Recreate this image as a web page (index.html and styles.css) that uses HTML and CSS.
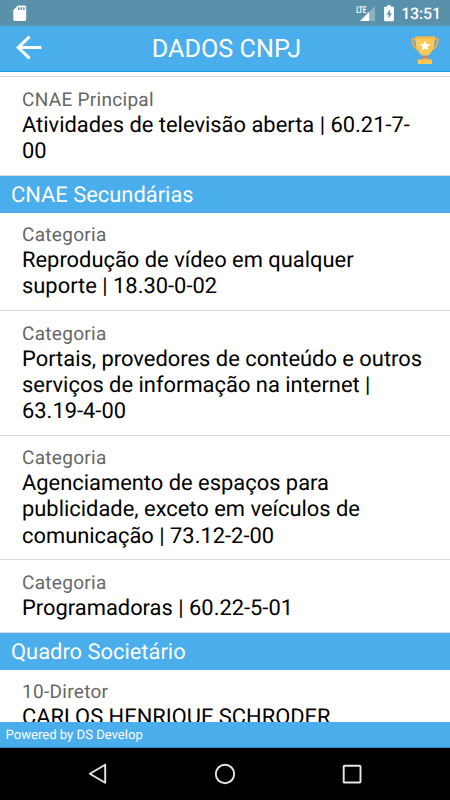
FILE: index.html
```html
<!DOCTYPE html>
<html lang="pt-BR">
<head>
    <meta charset="UTF-8">
    <meta name="viewport" content="width=device-width, initial-scale=1.0">
    <title>Dados CNPJ</title>
    <link rel="stylesheet" href="styles.css">
</head>
<body>
    <div class="screen">
        <div class="statusbar">
            <svg class="sd" width="14" height="17" viewBox="0 0 14 17">
                <path d="M5 0.5H11.7Q13.2 0.5 13.2 2V14.5Q13.2 16 11.7 16H1.8Q0.3 16 0.3 14.5V5.2Z" fill="#fff"/>
                <path d="M5.7 2.2V5M8.3 2.2V5M10.9 2.2V5" stroke="#5991ab" stroke-width="1.5"/>
            </svg>
            <div class="status-right">
                <svg class="signal" width="20" height="17" viewBox="0 0 20 17">
                    <path d="M19 1V16H4Z" fill="#8cb1c2"/>
                    <path d="M13.2 6.8V16H4Z" fill="#fff"/>
                    <path d="M0 0H11V8H0Z" fill="#5991ab"/>
                    <text x="0.2" y="7.6" class="lte" textLength="10" lengthAdjust="spacingAndGlyphs">LTE</text>
                </svg>
                <svg class="battery" width="10" height="17" viewBox="0 0 10 17">
                    <path d="M3 0.3H7V1.8H9Q9.9 1.8 9.9 2.7V15.3Q9.9 16.2 9 16.2H1Q0.1 16.2 0.1 15.3V2.7Q0.1 1.8 1 1.8H3Z" fill="#fff"/>
                    <path d="M6.2 4.2L2.5 9.5H4.5V13.8L7.8 8.2H5.8Z" fill="#5991ab"/>
                </svg>
                <span class="clock">13:51</span>
            </div>
        </div>

        <div class="header">
            <svg class="back" width="26" height="26" viewBox="0 0 26 26">
                <path d="M13.6 1.6L2.2 12.5L13.6 23.4M2.2 12.5H25.3" fill="none" stroke="#fff" stroke-width="3"/>
            </svg>
            <h1>DADOS CNPJ</h1>
            <svg class="trophy" width="28" height="29" viewBox="0 0 28 29">
                <path d="M5 3.2H1.2Q1.2 12.4 9.5 14.5M23 3.2H26.8Q26.8 12.4 18.5 14.5" fill="none" stroke="#f0aa45" stroke-width="2"/>
                <path d="M4.2 0.5H23.8C23.8 9 22.5 15 17.2 19.5H10.8C5.5 15 4.2 9 4.2 0.5Z" fill="#fdc854"/>
                <path d="M4.2 0.5H23.8V2H4.2Z" fill="#f3b04a"/>
                <path d="M14 4.5L15.6 8L19.1 8.4L16.5 10.9L17.3 14.5L14 12.6L10.7 14.5L11.5 10.9L8.9 8.4L12.4 8Z" fill="#fff"/>
                <path d="M12 20.5H16V24H12Z" fill="#f0aa45"/>
                <path d="M11.5 20.2H16.5V22H11.5Z" fill="#ee6a50"/>
                <path d="M7 23.7H21V28H7Z" fill="#fdc854"/>
                <path d="M7 23.2H21V24.4H7Z" fill="#f3b04a"/>
            </svg>
        </div>

        <!-- list scrolled a bit, last item is cut by the footer -->
        <div class="list">
            <div class="item first">
                <span class="label">CNAE Principal</span>
                <p>Atividades de televisão aberta | 60.21-7-<br>00</p>
            </div>
            <h2>CNAE Secundárias</h2>
            <div class="item">
                <span class="label">Categoria</span>
                <p>Reprodução de vídeo em qualquer<br>suporte | 18.30-0-02</p>
            </div>
            <div class="item">
                <span class="label">Categoria</span>
                <p>Portais, provedores de conteúdo e outros<br>serviços de informação na internet |<br>63.19-4-00</p>
            </div>
            <div class="item">
                <span class="label">Categoria</span>
                <p>Agenciamento de espaços para<br>publicidade, exceto em veículos de<br>comunicação | 73.12-2-00</p>
            </div>
            <div class="item">
                <span class="label">Categoria</span>
                <p>Programadoras | 60.22-5-01</p>
            </div>
            <h2>Quadro Societário</h2>
            <div class="item">
                <span class="label">10-Diretor</span>
                <p>CARLOS HENRIQUE SCHRODER</p>
            </div>
        </div>

        <div class="footer">Powered by DS Develop</div>

        <div class="navbar">
            <svg width="20" height="22" viewBox="0 0 20 22">
                <path d="M17.2 1.8V19.8L1.8 10.8Z" fill="none" stroke="#e6e6e6" stroke-width="1.9" stroke-linejoin="round"/>
            </svg>
            <svg width="22" height="22" viewBox="0 0 22 22">
                <circle cx="11" cy="11" r="9.2" fill="none" stroke="#e6e6e6" stroke-width="1.9"/>
            </svg>
            <svg width="20" height="20" viewBox="0 0 20 20">
                <rect x="1.7" y="1.7" width="16.8" height="16.8" rx="0.8" fill="none" stroke="#e6e6e6" stroke-width="1.9"/>
            </svg>
        </div>
    </div>
</body>
</html>
```
FILE: styles.css
```css
*{
    margin: 0;
    padding: 0;
    box-sizing: border-box;
}
body
{
    font-family: Roboto, sans-serif;
    background: #fff;
    text-rendering: geometricPrecision;
}
.screen
{
    width: 450px;
    height: 800px;
    display: flex;
    flex-direction: column;
    overflow: hidden;
}
.statusbar
{
    height: 26px;
    flex: none;
    display: flex;
    justify-content: space-between;
    align-items: center;
    padding: 0 9px 0 13px;
    background: #5991ab;
}
.status-right
{
    display: flex;
    align-items: center;
}
.lte
{
    font-size: 9.5px;
    font-weight: bold;
    fill: #fff;
}
.battery
{
    margin-left: 8px;
}
.clock
{
    margin-left: 7px;
    color: #fff;
    font-size: 16px;
    font-weight: 500;
    letter-spacing: -0.15px;
    line-height: 26px;
    padding-top: 2px;
}
.header
{
    height: 46px;
    flex: none;
    display: flex;
    justify-content: space-between;
    align-items: center;
    padding: 0 11px 0 16px;
    background: #4aadec;
    border-bottom: 1px solid #18a0e4;
}
.back
{
    margin-top: -2px;
}
.trophy
{
    margin-top: 3px;
}
.header h1
{
    color: #fff;
    font-size: 25.2px;
    font-weight: 400;
    padding-top: 1px;
}
.list
{
    flex: 1;
    overflow: hidden;
    padding-top: 4.2px;
}
.item
{
    padding: 10.6px 22px 9.4px;
    border-bottom: 1px solid #d9d9d9;
}
.item.first
{
    border-top: 1px solid #d9d9d9;
}
.label
{
    display: block;
    color: #666;
    font-size: 19px;
    line-height: 23.2px;
    letter-spacing: 0.3px;
    padding-bottom: 1.6px;
}
.item p
{
    color: #000;
    font-size: 21.9px;
    line-height: 26.3px;
    white-space: nowrap;
}
.list h2
{
    height: 37.2px;
    padding-left: 11px;
    background: #4aadec;
    color: #fff;
    font-size: 21.9px;
    font-weight: 400;
    line-height: 39.5px;
}
.footer
{
    height: 26px;
    flex: none;
    padding-left: 5.5px;
    background: #4aadec;
    border-bottom: 1px solid #2f86bd;
    color: #fff;
    font-size: 13.1px;
    line-height: 27px;
}
.navbar
{
    height: 52px;
    flex: none;
    display: flex;
    justify-content: space-between;
    align-items: center;
    padding: 0 88px 0 88px;
    background: #000;
}
```
